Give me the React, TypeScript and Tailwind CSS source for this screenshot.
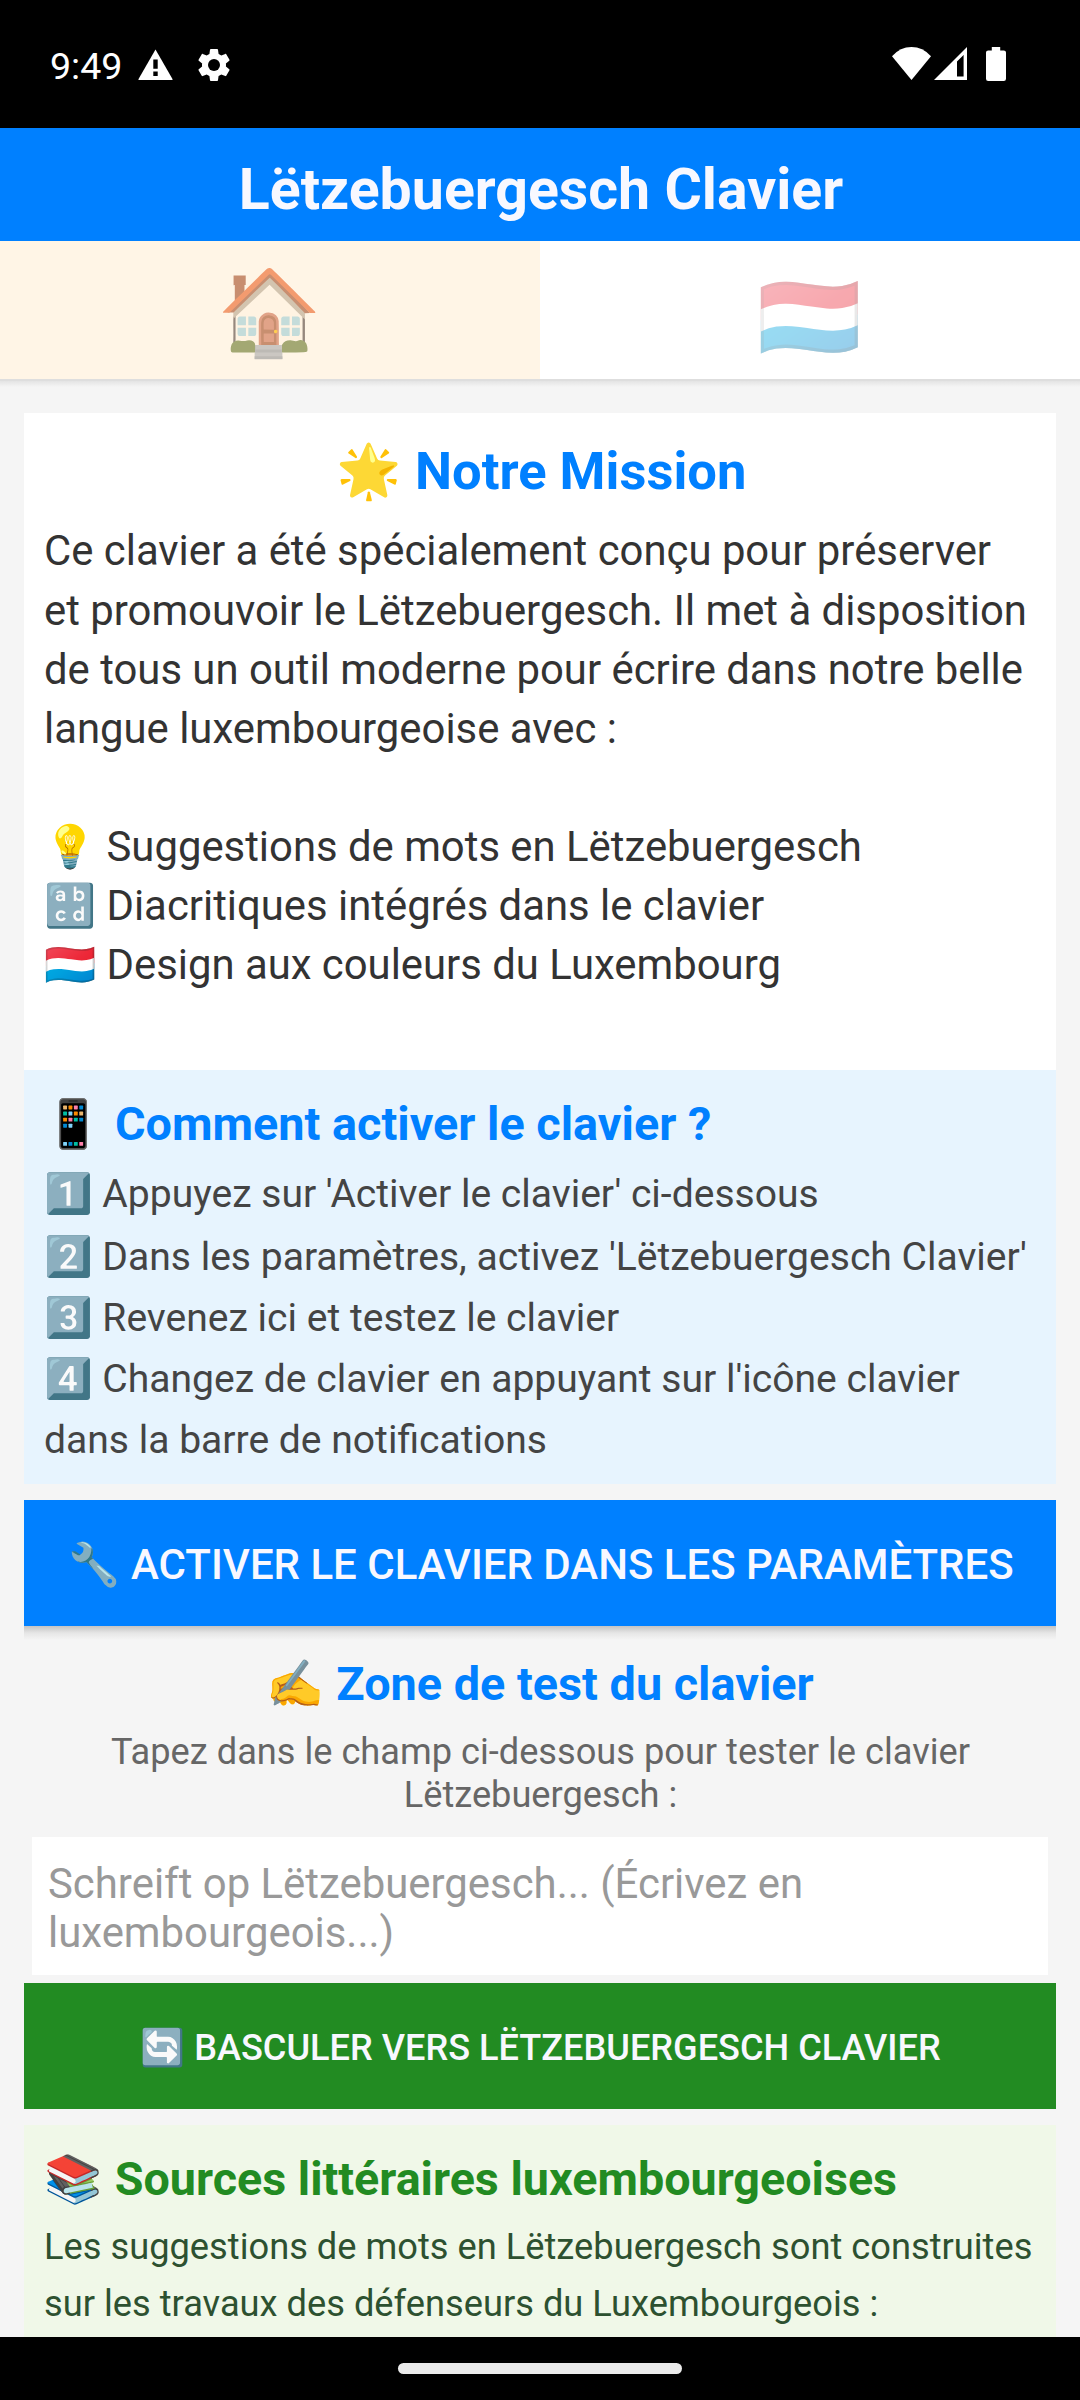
import type { ReactNode } from "react";

function StatusBar() {
  return (
    <div className="flex h-[128px] items-start justify-between bg-black px-[50px] text-white">
      <div className="flex items-start">
        <span className="mt-[44px] w-[88px] text-[37.6px] leading-[44px]">9:49</span>
        <svg className="mt-[49px] h-[31px] w-[35px]" viewBox="0 0 35 31" fill="white">
          <path d="M17.5 0.5 34.6 30.2Q34.8 31 34 31H1Q0.2 31 0.4 30.2Z" />
          <path d="M15.3 10.5h4.4v9.2h-4.4zM15.3 22.6h4.4v4.4h-4.4z" fill="black" />
        </svg>
        <svg className="ml-[21px] mt-[45px] h-[40px] w-[40px]" viewBox="0 0 24 24" fill="white">
          <path d="M19.14,12.94c0.04-0.3,0.06-0.61,0.06-0.94c0-0.32-0.02-0.64-0.07-0.94l2.03-1.58c0.18-0.14,0.23-0.41,0.12-0.61l-1.92-3.32c-0.12-0.22-0.37-0.29-0.59-0.22l-2.39,0.96c-0.5-0.38-1.03-0.7-1.62-0.94L14.4,2.81c-0.04-0.24-0.24-0.41-0.48-0.41h-3.84c-0.24,0-0.43,0.17-0.47,0.41L9.25,5.35C8.66,5.59,8.12,5.92,7.63,6.29L5.24,5.33c-0.22-0.08-0.47,0-0.59,0.22L2.74,8.87C2.62,9.08,2.66,9.34,2.86,9.48l2.03,1.58C4.84,11.36,4.8,11.69,4.8,12s0.02,0.64,0.07,0.94l-2.03,1.58c-0.18,0.14-0.23,0.41-0.12,0.61l1.92,3.32c0.12,0.22,0.37,0.29,0.59,0.22l2.39-0.96c0.5,0.38,1.03,0.7,1.62,0.94l0.36,2.54c0.05,0.24,0.24,0.41,0.48,0.41h3.84c0.24,0,0.44-0.17,0.47-0.41l0.36-2.54c0.59-0.24,1.13-0.56,1.62-0.94l2.39,0.96c0.22,0.08,0.47,0,0.59-0.22l1.92-3.32c0.12-0.22,0.07-0.47-0.12-0.61L19.14,12.94z" />
          <circle cx="12" cy="12" r="3.6" fill="black" />
        </svg>
      </div>
      <div className="mr-[24px] mt-[47px] flex items-start">
        <svg className="h-[33px] w-[39px]" viewBox="0 0 39 33" fill="white">
          <path d="M19.5 33 0 9.2Q8.2 0 19.5 0T39 9.2Z" />
        </svg>
        <svg className="ml-[3px] h-[33px] w-[33px]" viewBox="0 0 33 33" fill="white">
          <path fillRule="evenodd" d="M33 0V33H0ZM23 14.5V29.5H29.6V8Z" />
        </svg>
        <svg className="ml-[19px] h-[34px] w-[20px]" viewBox="0 0 20 34" fill="white">
          <path d="M5.8 0h8.4v3.4h3.6Q20 3.4 20 5.6V31.8Q20 34 17.8 34H2.2Q0 34 0 31.8V5.6Q0 3.4 2.2 3.4H5.8Z" />
        </svg>
      </div>
    </div>
  );
}

function Lines({ className, children }: { className: string; children: ReactNode }) {
  return <div className={"whitespace-pre " + className}>{children}</div>;
}

export default function App() {
  return (
    <div className="flex h-[2400px] w-[1080px] flex-col overflow-hidden bg-[#f5f5f5] font-['Roboto','Noto_Color_Emoji',sans-serif]">
      <StatusBar />

      <header className="h-[113px] bg-[#0080ff] pt-[5px] pl-[2px] text-center text-[57.25px] leading-[113px] font-bold text-[#f8f8ff]">
        Lëtzebuergesch Clavier
      </header>

      <nav className="grid h-[138px] shrink-0 grid-cols-2 text-center text-[84px] leading-[138px]">
        <div className="bg-[#fff5e6] pt-[3px]">
          <div className="h-[135px] opacity-65">🏠</div>
        </div>
        <div className="bg-white pt-[8px]">
          <div className="h-[130px] opacity-40">🇱🇺</div>
        </div>
      </nav>
      <div className="h-[2px] shrink-0 bg-[#dedede]" />
      <div className="h-[6px] shrink-0 bg-linear-to-b from-[#e4e4e4] to-[#f5f5f5]" />

      <main className="mt-[26px] flex h-[1924px] shrink-0 flex-col overflow-hidden px-[24px]">
        <section className="h-[657px] shrink-0 bg-white px-[20px] pt-[28px]">
          <h2 className="pl-[3px] text-center text-[52.5px] leading-[60px] font-bold text-[#0080ff]">🌟 Notre Mission</h2>
          <Lines className="mt-[20px] text-[41.85px] leading-[59px] text-[#333333]">
            <div className="leading-[60px]">Ce clavier a été spécialement conçu pour préserver</div>
            {`et promouvoir le Lëtzebuergesch. Il met à disposition
de tous un outil moderne pour écrire dans notre belle
langue luxembourgeoise avec :

💡 Suggestions de mots en Lëtzebuergesch
🔡 Diacritiques intégrés dans le clavier
🇱🇺 Design aux couleurs du Luxembourg`}
          </Lines>
        </section>

        <section className="h-[414px] shrink-0 bg-[#e7f4fe] px-[20px] pt-[26px]">
          <h2 className="text-[46.8px] leading-[56px] font-bold text-[#0080ff]">
            📱<span className="ml-px"> Comment activer le clavier ?</span>
          </h2>
          <Lines className="mt-[10px] text-[39.07px] leading-[61px] text-[#444444]">
            <div className="leading-[64px]">1️⃣ Appuyez sur 'Activer le clavier' ci-dessous</div>
            <div className="pt-px">
              {`2️⃣ Dans les paramètres, activez 'Lëtzebuergesch Clavier'
3️⃣ Revenez ici et testez le clavier
4️⃣ Changez de clavier en appuyant sur l'icône clavier
dans la barre de notifications`}
            </div>
          </Lines>
        </section>

        <button className="mt-[16px] h-[126px] shrink-0 bg-[#0080ff] pt-[5px] pl-[2px] text-[41.98px] font-medium whitespace-nowrap text-[#f8f8ff]">
          🔧 ACTIVER LE CLAVIER DANS LES PARAMÈTRES
        </button>
        <div className="h-[14px] shrink-0 bg-linear-to-b from-[#c4c4c4] via-[#e6e6e6] to-[#f5f5f5]" />

        <h2 className="mt-[16px] text-center text-[46.8px] leading-[56px] font-bold text-[#0080ff]">✍️ Zone de test du clavier</h2>
        <p className="mt-[18px] pl-px text-center text-[36.2px] leading-[43px] text-[#666666]">
          Tapez dans le champ ci-dessous pour tester le clavier
          <br />
          Lëtzebuergesch :
        </p>

        <div className="mx-[8px] mt-[21px] h-[138px] shrink-0 bg-white px-[16px] pt-[22px] text-[41.9px] leading-[49px] text-[#999999]">
          Schreift op Lëtzebuergesch... (Écrivez en
          <br />
          luxembourgeois...)
        </div>

        <button className="mt-[8px] h-[126px] shrink-0 bg-[#228b22] pt-[5px] pl-px text-[36.13px] font-medium whitespace-nowrap text-[#f8f8ff]">
          🔄 BASCULER VERS LËTZEBUERGESCH CLAVIER
        </button>

        <section className="mt-[16px] h-[212px] shrink-0 bg-[#f0f8e8] px-[20px] pt-[26px]">
          <h2 className="text-[46.7px] leading-[56px] font-bold text-[#228b22]">
            📚<span className="ml-px"> Sources littéraires luxembourgeoises</span>
          </h2>
          <Lines className="mt-[11px] text-[36.25px] leading-[57px] text-[#2d5130]">
            {`Les suggestions de mots en Lëtzebuergesch sont construites
sur les travaux des défenseurs du Luxembourgeois :`}
          </Lines>
        </section>
      </main>

      <footer className="flex h-[63px] shrink-0 justify-center bg-black pt-[26px]">
        <div className="h-[11px] w-[284px] rounded-full bg-[#ebebeb]" />
      </footer>
    </div>
  );
}
